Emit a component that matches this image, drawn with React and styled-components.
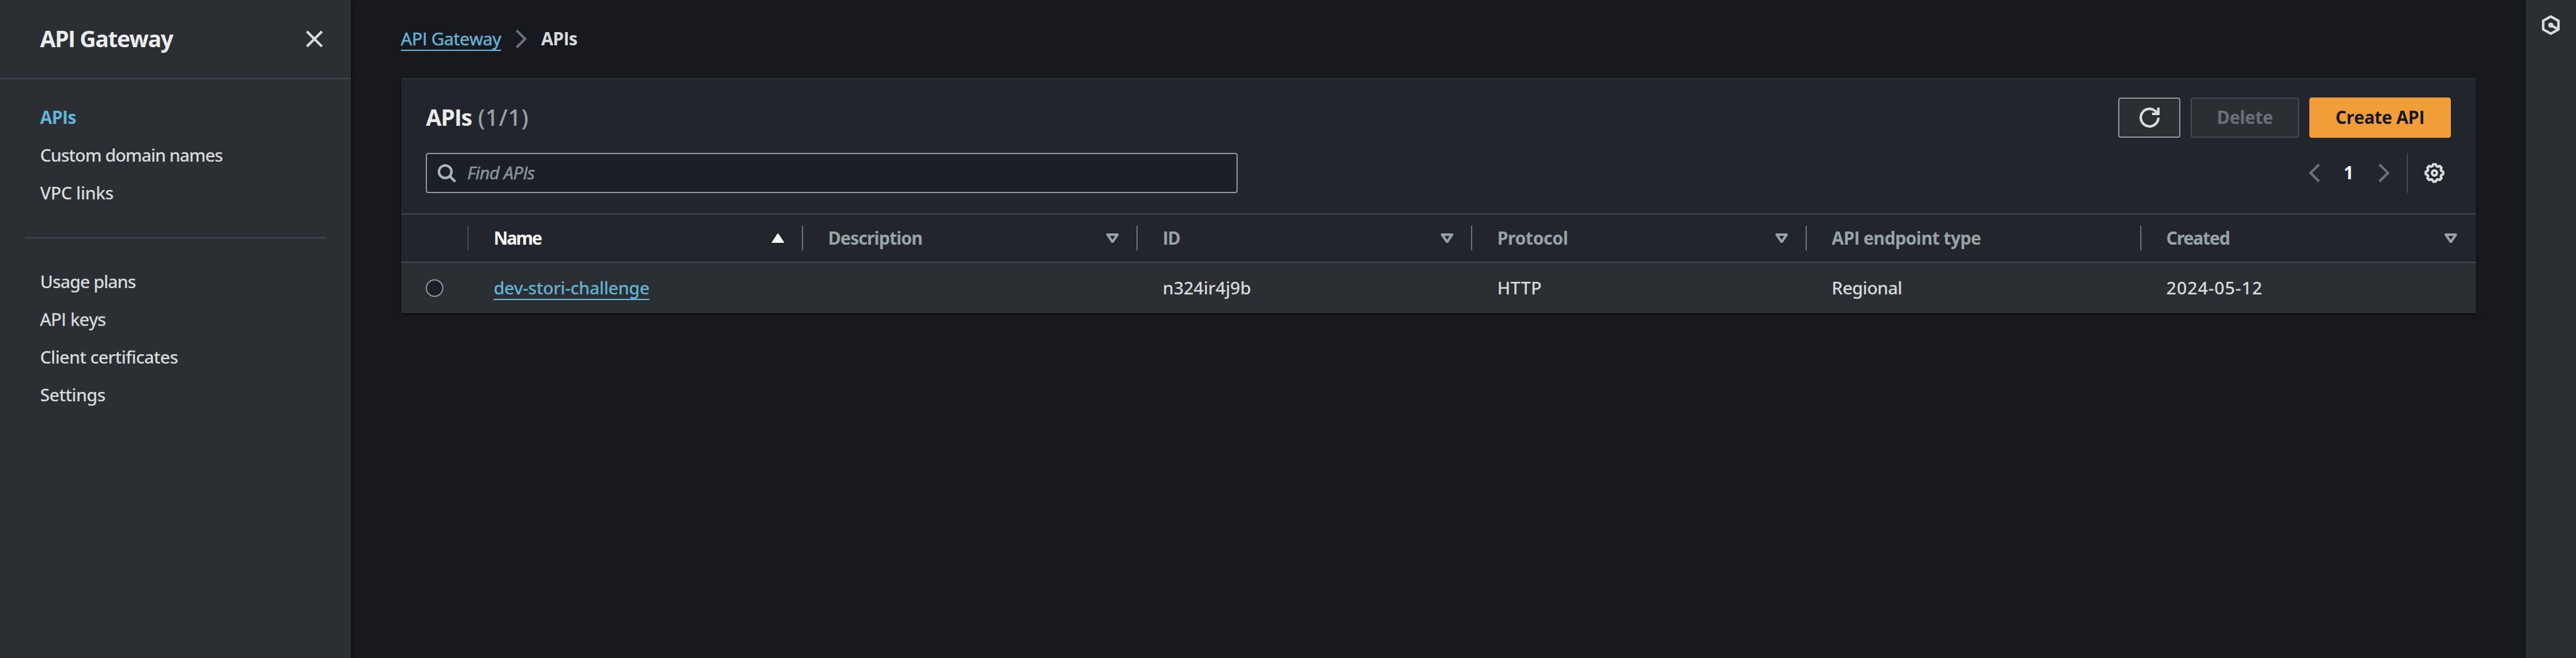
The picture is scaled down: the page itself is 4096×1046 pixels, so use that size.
import React from 'react';
import styled, { createGlobalStyle, css } from 'styled-components';

const u = (n) => `${+((n * 4096) / 4112).toFixed(3)}px`;

const c = {
  page: '#17191e',
  surface: '#22252c',
  raised: '#2b2e33',
  input: '#1b2028',
  line: '#424650',
  lineStrong: '#6a7078',
  text: '#d6dbdb',
  heading: '#ebeded',
  muted: '#97a4a5',
  disabled: '#6a7078',
  control: '#899596',
  link: '#63b5d5',
  bright: '#fafafa',
  orange: '#f19e38',
};

const Global = createGlobalStyle`
  * { box-sizing: border-box; }
  body { margin: 0; background: ${c.page}; }
`;

const Page = styled.div`
  display: grid;
  grid-template-columns: ${u(560)} 1fr ${u(80)};
  height: 1046px;
  overflow: hidden;
  background: ${c.page};
  color: ${c.text};
  font-family: 'Noto Sans', 'Open Sans', sans-serif;
  font-size: ${u(28)};
  line-height: ${u(40)};
`;

const Label = styled.span`
  display: inline-block;
  white-space: nowrap;
  font-size: ${(p) => u(p.$size || 28)};
  font-weight: ${(p) => (p.$bold ? 700 : p.$plain ? 400 : 500)};
  letter-spacing: ${(p) => u(p.$track || 0)};
  color: ${(p) => p.$color || 'inherit'};
  ${(p) => p.$plain && css`
    font-family: 'Open Sans', 'Noto Sans', sans-serif;
    ${!p.$bold && css`-webkit-text-stroke: 0.6px currentColor;`}
  `}
  ${(p) => p.$italic && css`font-style: italic;`}
`;

const LinkLabel = styled(Label).attrs({ as: 'a' })`
  color: ${c.link};
  text-decoration: underline;
  text-decoration-thickness: 2px;
  text-underline-offset: ${u(7)};
  text-decoration-skip-ink: none;
`;

const Sidebar = styled.nav`
  background: ${c.raised};
  box-shadow: 1px 0 3px rgba(0, 0, 0, 0.6);
`;
const SidebarHeader = styled.header`
  display: flex;
  align-items: center;
  justify-content: space-between;
  height: ${u(126)};
  padding: 0 ${u(42)} 0 ${u(64)};
  border-bottom: 2px solid ${c.line};
`;
const NavList = styled.ul`
  list-style: none;
  margin: 0;
  padding: ${u(32)} 0 0 ${u(64)};
`;
const NavItem = styled.li`
  display: flex;
  align-items: center;
  height: ${u(60)};
`;
const NavDivider = styled.hr`
  margin: ${u(40)} ${u(40)} ${u(8)};
  border: 0;
  height: 2px;
  background: ${c.line};
`;

const Main = styled.main`
  padding: ${u(32)} ${u(80)} 0;
`;
const Breadcrumbs = styled.div`
  display: flex;
  align-items: center;
  gap: ${u(16)};
  height: ${u(60)};
  margin-bottom: ${u(32)};
`;

const Panel = styled.section`
  height: ${u(376)};
  background: ${c.surface};
  border-top: 2px solid ${c.raised};
  box-shadow: 0 2px 3px rgba(0, 0, 0, 0.7);
`;
const TitleRow = styled.div`
  display: flex;
  align-items: center;
  justify-content: space-between;
  padding: ${u(30)} ${u(40)} 0;
  height: ${u(94)};
`;
const Title = styled.h2`
  display: flex;
  gap: ${u(10)};
  margin: 0;
  font-weight: 400;
`;
const Actions = styled.div`
  display: flex;
  gap: ${u(16)};
`;
const Button = styled.button`
  display: flex;
  align-items: center;
  justify-content: center;
  width: ${(p) => u(p.$width)};
  height: ${u(64)};
  padding: 0;
  border-radius: 4px;
  font: inherit;
  border: 2px solid ${(p) => p.$border};
  background: ${(p) => p.$fill || c.raised};
`;

const FilterRow = styled.div`
  display: flex;
  justify-content: space-between;
  align-items: center;
  height: ${u(120)};
  padding: 0 ${u(50)} ${u(8)} ${u(40)};
`;
const SearchBox = styled.div`
  display: flex;
  align-items: center;
  gap: ${u(17)};
  width: ${u(1296)};
  height: ${u(64)};
  padding-left: ${u(15)};
  border: 2px solid ${c.control};
  border-radius: 4px;
  background: ${c.input};
`;
const Pagination = styled.div`
  display: flex;
  align-items: center;
`;
const PageNumber = styled.span`
  width: ${u(80)};
  padding-right: ${u(2)};
  text-align: center;
`;
const PaginationRule = styled.span`
  width: 2px;
  height: ${u(64)};
  margin: 0 ${u(26)} 0 ${u(20)};
  background: ${c.line};
`;

const gridRow = css`
  display: grid;
  grid-template-columns: ${u(108)} repeat(6, 1fr);
  align-items: center;
`;
const HeadRow = styled.div`
  ${gridRow}
  height: ${u(80)};
  border-top: 2px solid ${c.line};
  border-bottom: 2px solid ${c.line};
`;
const BodyRow = styled.div`
  ${gridRow}
  height: ${u(80)};
  background: ${c.raised};
`;
const HeadCell = styled.div`
  display: flex;
  align-items: center;
  height: ${u(40)};
  padding-left: ${u(40)};
  padding-right: ${(p) => (p.$rule ? u(28) : u(30))};
  border-right: ${(p) => (p.$rule ? `2px solid ${p.$rule}` : '0')};
  justify-content: space-between;
`;
const Cell = styled.div`
  display: flex;
  align-items: center;
  padding-left: ${u(40)};
`;
const Radio = styled.span`
  width: ${u(28)};
  height: ${u(28)};
  border: 2px solid ${c.control};
  border-radius: 50%;
  background: ${c.input};
`;

const Rail = styled.aside`
  display: flex;
  justify-content: center;
  padding-top: ${u(24)};
  background: ${c.raised};
  box-shadow: -1px 0 3px rgba(0, 0, 0, 0.6);
`;

const Svg = styled.svg`
  display: block;
  flex: none;
  width: ${u(32)};
  height: ${u(32)};
  fill: none;
  stroke: ${(p) => p.$color || c.text};
  stroke-width: 2;
`;
const SortSvg = styled.svg`
  flex: none;
  width: ${u(20)};
  height: ${u(16)};
  stroke-linejoin: round;
`;
const Icon = ({ children, color }) => <Svg viewBox="0 0 16 16" $color={color}>{children}</Svg>;

const CloseIcon = () => <Icon><path d="M2 2l12 12M14 2L2 14" /></Icon>;
const AngleRight = () => <Icon color={c.disabled}><path d="M4.2 1.2L11 8l-6.8 6.8" /></Icon>;
const AngleLeft = () => <Icon color={c.disabled}><path d="M11.8 1.2L5 8l6.8 6.8" /></Icon>;
const SearchIcon = () => (
  <Icon color="#aab7b8"><circle cx="7" cy="7" r="5" /><path d="M10.6 10.6L15 15" /></Icon>
);
const RefreshIcon = () => (
  <Icon><path d="M15 8A7 7 0 1 1 12.6 2.7L14.6 5" /><path d="M10 5h5V0" /></Icon>
);
const polar = (deg, r) => {
  const a = (deg * Math.PI) / 180;
  return `${(8 + r * Math.sin(a)).toFixed(2)} ${(8 - r * Math.cos(a)).toFixed(2)}`;
};
const gearPath = `M${[0, 45, 90, 135, 180, 225, 270, 315]
  .map((a) => `${polar(a - 8, 7)}L${polar(a + 8, 7)}L${polar(a + 17, 5.7)}L${polar(a + 28, 5.7)}`)
  .join('L')}Z`;
const GearIcon = () => (
  <Icon><path d={gearPath} strokeLinejoin="round" /><circle cx="8" cy="8" r="2" /></Icon>
);
const HexIcon = () => (
  <Icon>
    <path d="M8 1.15l6.1 3.4v6.9L8 14.85l-6.1-3.4v-6.9z" strokeLinejoin="round" />
    <path d="M8 8l5.8 3.3" />
    <circle cx="8" cy="8" r="2" fill={c.text} stroke="none" />
  </Icon>
);
const SortIcon = ({ active }) => (
  <SortSvg viewBox="0 0 20 16">
    {active ? (
      <path d="M10 1.5L18.8 14.8H1.2z" fill={c.bright} stroke={c.bright} strokeWidth="2.4" />
    ) : (
      <path d="M2 2h16L10 13.8z" fill="none" stroke={c.muted} strokeWidth="4" />
    )}
  </SortSvg>
);

const primaryNav = [
  { text: 'APIs', bold: true, plain: true, track: -0.7, color: c.link },
  { text: 'Custom domain names', track: -0.96 },
  { text: 'VPC links', track: -0.45 },
];
const secondaryNav = [
  { text: 'Usage plans', track: -0.95 },
  { text: 'API keys', plain: true, track: -0.3 },
  { text: 'Client certificates', track: -0.64 },
  { text: 'Settings', track: -0.6 },
];
const columns = [
  { text: 'Name', track: -1.9, active: true, sort: true },
  { text: 'Description', track: -0.93, sort: true },
  { text: 'ID', track: -1.3, plain: true, sort: true },
  { text: 'Protocol', track: -0.5, sort: true },
  { text: 'API endpoint type', track: -0.7, plain: true },
  { text: 'Created', track: -1.3, sort: true },
];

const Nav = ({ items }) => (
  <NavList>
    {items.map((i) => (
      <NavItem key={i.text}>
        <Label $bold={i.bold} $plain={i.plain} $track={i.track} $color={i.color}>{i.text}</Label>
      </NavItem>
    ))}
  </NavList>
);

export default function App() {
  return (
    <Page>
      <Global />
      <Sidebar>
        <SidebarHeader>
          <Label $bold $plain $size={36} $track={-1.35} $color={c.heading}>API Gateway</Label>
          <CloseIcon />
        </SidebarHeader>
        <Nav items={primaryNav} />
        <NavDivider />
        <Nav items={secondaryNav} />
      </Sidebar>
      <Main>
        <Breadcrumbs>
          <LinkLabel $plain $track={-0.23}>API Gateway</LinkLabel>
          <AngleRight />
          <Label $bold $plain $track={-0.7}>APIs</Label>
        </Breadcrumbs>
        <Panel>
          <TitleRow>
            <Title>
              <Label $bold $plain $size={36} $track={-1.1} $color={c.heading}>APIs</Label>
              <Label $size={36} $track={0.8} $color={c.muted}>(1/1)</Label>
            </Title>
            <Actions>
              <Button $width={100} $border={c.control} aria-label="Refresh"><RefreshIcon /></Button>
              <Button $width={173} $border={c.line}>
                <Label $bold $track={-0.3} $color={c.disabled}>Delete</Label>
              </Button>
              <Button $width={226} $border={c.orange} $fill={c.orange}>
                <Label $bold $plain $track={-0.4} $color={c.page}>Create API</Label>
              </Button>
            </Actions>
          </TitleRow>
          <FilterRow>
            <SearchBox>
              <SearchIcon />
              <Label $italic $plain $track={-0.4} $color={c.control}>Find APIs</Label>
            </SearchBox>
            <Pagination>
              <AngleLeft />
              <PageNumber><Label $bold $color={c.bright}>1</Label></PageNumber>
              <AngleRight />
              <PaginationRule />
              <GearIcon />
            </Pagination>
          </FilterRow>
          <HeadRow>
            <HeadCell $rule={c.line} />
            {columns.map((col, i) => (
              <HeadCell key={col.text} $rule={i < 5 && c.lineStrong}>
                <Label $bold $plain={col.plain} $track={col.track} $color={col.active ? c.bright : c.muted}>
                  {col.text}
                </Label>
                {col.sort && <SortIcon active={col.active} />}
              </HeadCell>
            ))}
          </HeadRow>
          <BodyRow>
            <Cell><Radio /></Cell>
            <Cell><LinkLabel $track={-0.38}>dev-stori-challenge</LinkLabel></Cell>
            <Cell />
            <Cell><Label $track={-0.1}>n324ir4j9b</Label></Cell>
            <Cell><Label $track={0.3}>HTTP</Label></Cell>
            <Cell><Label $track={-0.6}>Regional</Label></Cell>
            <Cell><Label $track={0.77}>2024-05-12</Label></Cell>
          </BodyRow>
        </Panel>
      </Main>
      <Rail><HexIcon /></Rail>
    </Page>
  );
}
